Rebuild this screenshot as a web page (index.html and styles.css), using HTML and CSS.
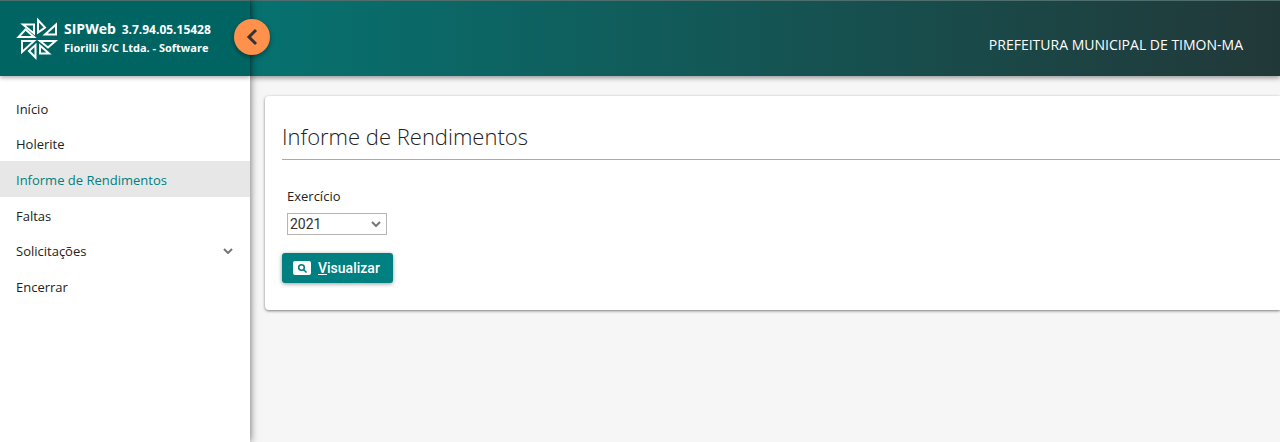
FILE: index.html
```html
<!DOCTYPE html>
<html lang="pt-BR">
<head>
    <meta charset="UTF-8">
    <meta name="viewport" content="width=device-width, initial-scale=1.0">
    <title>SIPWeb - Informe de Rendimentos</title>
    <link rel="stylesheet" href="styles.css">
</head>
<body>
    <aside class="sidebar">
        <div class="brand">
            <svg class="logo" viewBox="0 0 44 44" aria-hidden="true">
                <path d="M23 3V15.5L30 10.5ZM30 17.5L41 7.5V17.5ZM8 7.5H19V16.5ZM3.5 20H19L10.5 12.5ZM7 24H19L7 35ZM20.500 28V40.5L14 34ZM25 28.5L34 36.5H25ZM25 24H40.5L33 30.5Z"/>
            </svg>
            <div class="brand-text">
                <div><span class="brand-name">SIPWeb</span> <span class="brand-version">3.7.94.05.15428</span></div>
                <div>Fiorilli S/C Ltda. - Software</div>
            </div>
            <button type="button" class="toggle-btn" aria-label="Recolher menu">
                <svg viewBox="0 0 36 36"><path d="M22 11L15 18L22 25"/></svg>
            </button>
        </div>
        <nav class="menu">
            <a href="#">Início</a>
            <a href="#">Holerite</a>
            <a href="#" class="active">Informe de Rendimentos</a>
            <a href="#">Faltas</a>
            <a href="#">Solicitações
                <svg class="arrow" viewBox="0 0 10 6"><path d="M1 1L5 5L9 1"/></svg>
            </a>
            <a href="#">Encerrar</a>
        </nav>
    </aside>
    <div class="page">
        <header class="topbar">PREFEITURA MUNICIPAL DE TIMON-MA</header>
        <main class="card">
            <h1>Informe de Rendimentos</h1>
            <form>
                <div class="form-group">
                    <label for="exercicio">Exercício</label>
                    <div class="select-box">
                        <select id="exercicio" name="exercicio">
                            <option>2021</option>
                        </select>
                        <svg class="arrow" viewBox="0 0 10 6"><path d="M1 1L5 5L9 1"/></svg>
                    </div>
                </div>
                <button type="button" class="submit-btn">
                    <svg viewBox="0 0 18 14" aria-hidden="true">
                        <rect width="18" height="14" rx="2" fill="#fff"/>
                        <circle cx="8.5" cy="6.5" r="2.8" fill="none" stroke="#008080" stroke-width="1.6"/>
                        <path d="M10.5 8.5L13.5 11.5" stroke="#008080" stroke-width="1.6"/>
                    </svg>
                    <span><u>V</u>isualizar</span>
                </button>
            </form>
        </main>
    </div>
</body>
</html>
```
FILE: styles.css
```css
* {
    box-sizing: border-box;
}

body {
    margin: 0;
    display: flex;
    min-height: 100vh;
    font-family: 'Open Sans', 'Noto Sans', sans-serif;
    font-size: 13px;
    color: #222;
    background: #f6f6f6;
}

.sidebar {
    position: relative;
    z-index: 2;
    flex: 0 0 250px;
    background: #fff;
    box-shadow: 0 0 8px rgba(0, 0, 0, 0.6);
}

.brand {
    position: relative;
    display: flex;
    align-items: center;
    gap: 5px;
    height: 76px;
    padding-left: 15px;
    border-top: 1px solid #4d6e6c;
    background: #006562;
    box-shadow: 0 2px 4px rgba(0, 0, 0, 0.3);
    color: #fff;
}

.logo {
    width: 44px;
    height: 44px;
    fill: none;
    stroke: #fff;
    stroke-width: 2;
}

.brand-text {
    font-size: 11px;
    font-weight: 700;
    line-height: 18px;
    white-space: nowrap;
}

.brand-name {
    margin-right: 3px;
    font-size: 14px;
}

.brand-version {
    font-size: 12px;
}

.toggle-btn {
    position: absolute;
    top: 18px;
    right: -20px;
    width: 36px;
    height: 36px;
    padding: 0;
    border: none;
    border-radius: 50%;
    background: #ff914d;
    box-shadow: 0 2px 5px rgba(0, 0, 0, 0.4);
    cursor: pointer;
}

.toggle-btn svg {
    display: block;
    fill: none;
    stroke: #333;
    stroke-width: 3;
}

.menu {
    display: grid;
    grid-template-rows: repeat(6, 1fr);
    height: 214px;
    margin-top: 14px;
}

.menu a {
    display: flex;
    justify-content: space-between;
    align-items: center;
    padding: 2px 17px 0 16px;
    color: #222;
    text-decoration: none;
}

.menu a.active {
    background: #e7e7e7;
    color: #008080;
}

.arrow {
    width: 10px;
    height: 6px;
    fill: none;
    stroke: #777;
    stroke-width: 2;
}

.page {
    flex: 1;
    min-width: 0;
}

.topbar {
    height: 76px;
    padding: 14px 37px 0 0;
    border-top: 1px solid #4d6e6c;
    background: linear-gradient(90deg, #067270, #223838);
    box-shadow: 0 2px 5px rgba(0, 0, 0, 0.4);
    color: #fff;
    font-size: 14px;
    line-height: 60px;
    text-align: right;
}

.card {
    margin: 20px 0 0 15px;
    padding: 24px 0 27px 17px;
    border-radius: 4px 0 0 4px;
    background: #fff;
    box-shadow: 0 1px 3px rgba(0, 0, 0, 0.5);
}

.card h1 {
    margin: 0 0 26px;
    padding-bottom: 7px;
    border-bottom: 1px solid #dd9d68;
    font-size: 22px;
    font-weight: 300;
    line-height: 32px;
}

.form-group {
    margin: 0 0 18px 5px;
}

.form-group label {
    display: block;
    margin-bottom: 7px;
    line-height: 20px;
}

.select-box {
    position: relative;
    width: 100px;
}

.select-box select {
    display: block;
    width: 100%;
    height: 22px;
    padding: 0 2px;
    border: 1px solid #b5b5b5;
    border-radius: 0;
    background: #fff;
    color: #333;
    font-family: Roboto, sans-serif;
    font-size: 14px;
    appearance: none;
}

.select-box .arrow {
    position: absolute;
    top: 8px;
    right: 6px;
    pointer-events: none;
}

.submit-btn {
    display: flex;
    align-items: center;
    gap: 7px;
    height: 30px;
    padding: 0 13px 0 11px;
    border: none;
    border-radius: 3px;
    background: #008080;
    box-shadow: 0 1px 4px rgba(0, 0, 0, 0.4);
    color: #fff;
    font-family: Roboto, sans-serif;
    font-size: 14px;
    font-weight: 500;
    cursor: pointer;
}

.submit-btn svg {
    width: 18px;
    height: 14px;
}
```
